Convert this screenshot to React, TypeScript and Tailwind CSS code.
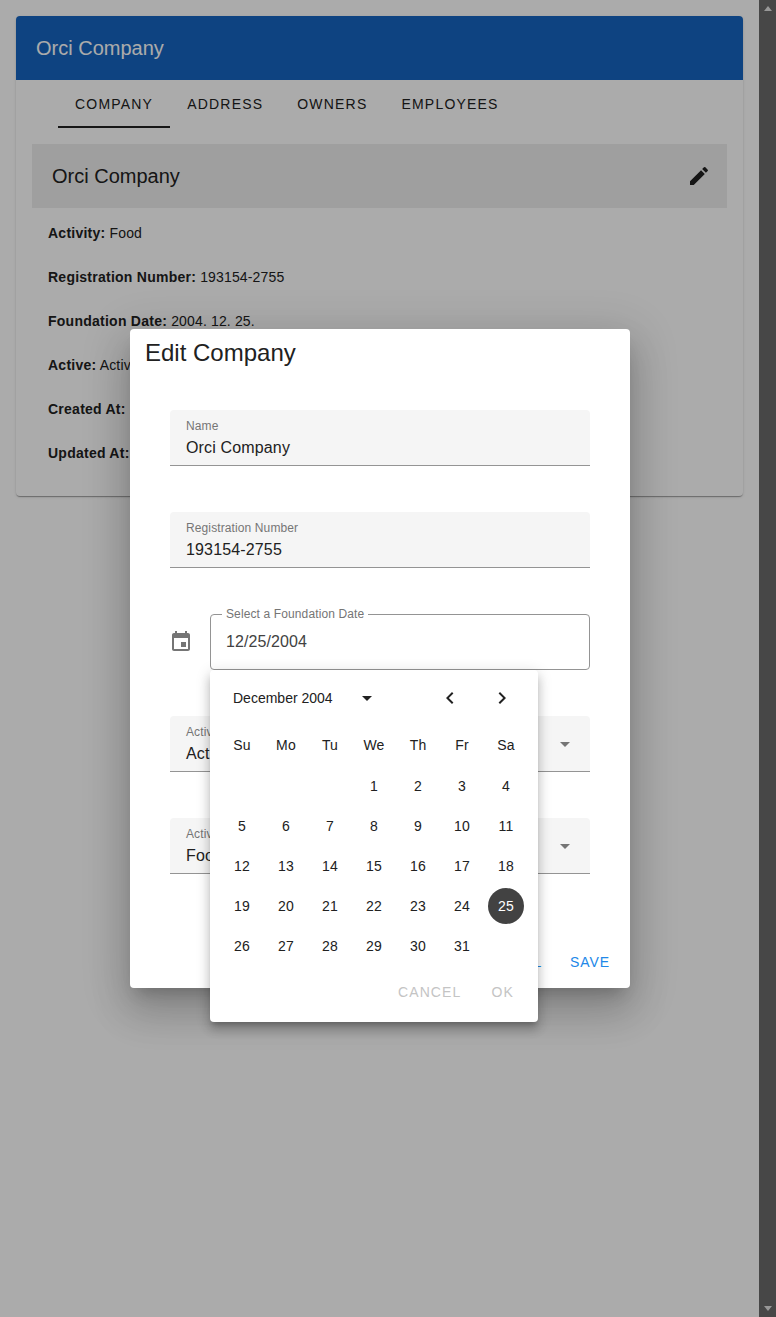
const details = [
  { label: 'Activity:', value: 'Food' },
  { label: 'Registration Number:', value: '193154-2755' },
  { label: 'Foundation Date:', value: '2004. 12. 25.' },
  { label: 'Active:', value: 'Active' },
  { label: 'Created At:', value: '2021. 03. 14.' },
  { label: 'Updated At:', value: '2021. 03. 14.' },
];

const tabs = ['Company', 'Address', 'Owners', 'Employees'];
const weekDays = ['Su', 'Mo', 'Tu', 'We', 'Th', 'Fr', 'Sa'];
const weeks = [
  [0, 0, 0, 1, 2, 3, 4],
  [5, 6, 7, 8, 9, 10, 11],
  [12, 13, 14, 15, 16, 17, 18],
  [19, 20, 21, 22, 23, 24, 25],
  [26, 27, 28, 29, 30, 31, 0],
];

function Icon({ d, className }: { d: string; className: string }) {
  return (
    <svg viewBox="0 0 24 24" fill="currentColor" className={className}>
      <path d={d} />
    </svg>
  );
}

const arrowDown = 'M7 10l5 5 5-5z';

function FilledField({ label, value, select }: { label: string; value: string; select?: boolean }) {
  return (
    <div className="relative h-14 w-[420px] rounded-t bg-[#f5f5f5] border-b border-[#949494] px-4">
      <div className="pt-[8px] text-xs leading-4 tracking-[0.00938em] text-[#757575]">{label}</div>
      <div className="mt-[2px] text-base leading-6 tracking-[0.00938em] text-[#212121]">{value}</div>
      {select && (
        <Icon d={arrowDown} className="absolute right-[13px] top-4 size-6 text-[#757575]" />
      )}
    </div>
  );
}

function DatePopover() {
  return (
    <div className="absolute left-20 top-[341px] z-10 w-[328px] h-[352px] rounded bg-white px-[10px] tracking-[0.01071em] shadow-[0_5px_5px_-3px_rgba(0,0,0,0.2),0_8px_10px_1px_rgba(0,0,0,0.14),0_3px_14px_2px_rgba(0,0,0,0.12)]">
      <div className="flex h-14 items-center pl-[13px] text-[#212121]">
        <span className="w-[100px] text-sm tracking-normal whitespace-nowrap">December 2004</span>
        <Icon d={arrowDown} className="ml-[22px] size-6" />
        <Icon d="M15.41 7.41L14 6l-6 6 6 6 1.41-1.41L10.83 12z" className="ml-[59px] size-6" />
        <Icon d="M10 6L8.59 7.41 13.17 12l-4.58 4.59L10 18l6-6z" className="ml-[28px] size-6" />
      </div>
      <div className="grid h-[38px] grid-cols-[repeat(7,44px)] items-center text-center text-sm text-[#212121]">
        {weekDays.map((day) => (
          <span key={day}>{day}</span>
        ))}
      </div>
      <div className="mt-[2px] grid grid-cols-[repeat(7,44px)] text-center text-sm text-[#212121]">
        {weeks.flat().map((day, index) => (
          <div key={index} className="flex h-10 items-center justify-center">
            {day === 25 ? (
              <span className="flex size-9 items-center justify-center rounded-full bg-[#424242] text-white">
                25
              </span>
            ) : (
              day > 0 && day
            )}
          </div>
        ))}
      </div>
      <div className="flex justify-end pt-4 pr-[14px] text-sm tracking-[1.13px] text-[#c4c4c4]">
        <span>CANCEL</span>
        <span className="ml-[30px]">OK</span>
      </div>
    </div>
  );
}

function EditDialog() {
  return (
    <div className="absolute left-[130px] top-[329px] z-10 h-[659px] w-[500px] rounded bg-white shadow-[0_11px_15px_-7px_rgba(0,0,0,0.2),0_24px_38px_3px_rgba(0,0,0,0.14),0_9px_46px_8px_rgba(0,0,0,0.12)]">
      <h2 className="pl-[15px] pt-[6px] text-2xl leading-9 text-[#212121]">Edit Company</h2>
      <div className="flex flex-col gap-[46px] px-10 pt-[39px]">
        <FilledField label="Name" value="Orci Company" />
        <FilledField label="Registration Number" value="193154-2755" />
        <div className="flex h-14 items-center">
          <Icon
            d="M17 12h-5v5h5v-5zM16 1v2H8V1H6v2H5c-1.11 0-1.99.9-1.99 2L3 19c0 1.1.89 2 2 2h14c1.1 0 2-.9 2-2V5c0-1.1-.9-2-2-2h-1V1h-2zm3 18H5V8h14v11z"
            className="size-6 -ml-[1px] mr-[1px] text-[#757575]"
          />
          <div className="relative ml-4 flex h-14 flex-1 items-center rounded border border-[#949494] px-[15px] text-base tracking-[0.1px] text-[#424242]">
            <span className="absolute -top-[9px] left-[11px] bg-white px-1 text-xs leading-4 tracking-[0.12px] text-[#757575]">
              Select a Foundation Date
            </span>
            12/25/2004
          </div>
        </div>
        <FilledField label="Active" value="Active" select />
        <FilledField label="Activity" value="Food" select />
      </div>
      <div className="flex justify-end gap-[28px] px-5 pt-[78px] text-sm tracking-[0.9px] text-[#2188e8]">
        <span>CANCEL</span>
        <span>SAVE</span>
      </div>
      <DatePopover />
    </div>
  );
}

export default function App() {
  return (
    <div className="relative flex h-[1317px] overflow-hidden bg-white font-['Liberation_Sans',Arial,sans-serif] text-[#212121]">
      <div className="flex-1 p-4">
        <div className="h-[480px] rounded bg-white shadow-[0_2px_1px_-1px_rgba(0,0,0,0.2),0_1px_1px_0_rgba(0,0,0,0.14),0_1px_3px_0_rgba(0,0,0,0.12)]">
          <div className="flex h-16 items-center rounded-t bg-[#1565c0] px-5 text-xl text-white">
            Orci Company
          </div>
          <div className="flex h-12 pl-[42px] text-sm tracking-[1.2px] uppercase">
            {tabs.map((tab, index) => (
              <div
                key={tab}
                className={
                  'flex items-center px-[17px] ' +
                  (index === 0 ? 'border-y-2 border-t-transparent border-b-[#212121]' : '')
                }
              >
                {tab}
              </div>
            ))}
          </div>
          <div className="mx-4 mt-4 flex h-16 items-center justify-between bg-[#eeeeee] pl-5 pr-4 text-xl">
            Orci Company
            <Icon
              d="M3 17.25V21h3.75L17.81 9.94l-3.75-3.75L3 17.25zM20.71 7.04c.39-.39.39-1.02 0-1.41l-2.34-2.34a.9959.9959 0 0 0-1.41 0l-1.83 1.83 3.75 3.75 1.83-1.83z"
              className="size-6"
            />
          </div>
          <div className="flex flex-col gap-6 px-8 pt-[15px] text-sm tracking-[0.01071em]">
            {details.map((row) => (
              <p key={row.label} className="leading-5">
                <b className="font-bold tracking-[0.25px]">{row.label}</b> {row.value}
              </p>
            ))}
          </div>
        </div>
      </div>
      <div className="absolute inset-y-0 left-0 right-[17px] bg-black/33" />
      <div className="flex w-[17px] flex-col items-center justify-between bg-[#474747] py-[6px]">
        <span className="border-x-4 border-b-[5px] border-x-transparent border-b-[#989898]" />
        <span className="border-x-4 border-t-[5px] border-x-transparent border-t-[#989898]" />
      </div>
      <EditDialog />
    </div>
  );
}
